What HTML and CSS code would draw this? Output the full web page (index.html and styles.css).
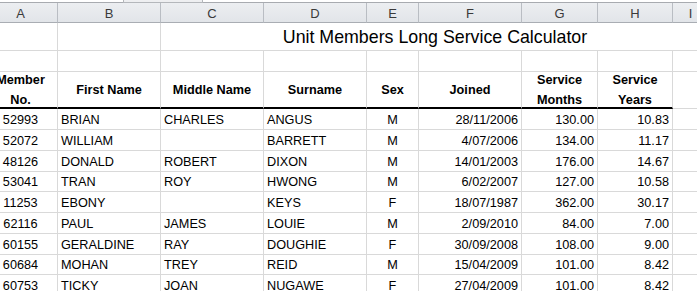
FILE: index.html
```html
<!DOCTYPE html>
<html>
<head>
<meta charset="utf-8">
<link rel="stylesheet" href="styles.css">
</head>
<body>
<div class="chrome"><div class="chrome-tab"></div></div>
<div class="sheet">
  <div class="c ch">A</div><div class="c ch">B</div><div class="c ch">C</div><div class="c ch">D</div><div class="c ch">E</div><div class="c ch">F</div><div class="c ch">G</div><div class="c ch">H</div><div class="c ch">I</div>

  <div class="c"></div><div class="c"></div><div class="c title">Unit Members Long Service Calculator</div>

  <div class="c"></div><div class="c"></div><div class="c"></div><div class="c"></div><div class="c"></div><div class="c"></div><div class="c"></div><div class="c"></div><div class="c"></div>

  <div class="c hd">Member<br>No.</div><div class="c hd">First Name</div><div class="c hd">Middle Name</div><div class="c hd">Surname</div><div class="c hd">Sex</div><div class="c hd">Joined</div><div class="c hd">Service<br>Months</div><div class="c hd">Service<br>Years</div><div class="c"></div>

  <div class="c cen">52993</div><div class="c">BRIAN</div><div class="c">CHARLES</div><div class="c">ANGUS</div><div class="c cen">M</div><div class="c rt">28/11/2006</div><div class="c rt">130.00</div><div class="c rt">10.83</div><div class="c"></div>
  <div class="c cen">52072</div><div class="c">WILLIAM</div><div class="c"></div><div class="c">BARRETT</div><div class="c cen">M</div><div class="c rt">4/07/2006</div><div class="c rt">134.00</div><div class="c rt">11.17</div><div class="c"></div>
  <div class="c cen">48126</div><div class="c">DONALD</div><div class="c">ROBERT</div><div class="c">DIXON</div><div class="c cen">M</div><div class="c rt">14/01/2003</div><div class="c rt">176.00</div><div class="c rt">14.67</div><div class="c"></div>
  <div class="c cen">53041</div><div class="c">TRAN</div><div class="c">ROY</div><div class="c">HWONG</div><div class="c cen">M</div><div class="c rt">6/02/2007</div><div class="c rt">127.00</div><div class="c rt">10.58</div><div class="c"></div>
  <div class="c cen">11253</div><div class="c">EBONY</div><div class="c"></div><div class="c">KEYS</div><div class="c cen">F</div><div class="c rt">18/07/1987</div><div class="c rt">362.00</div><div class="c rt">30.17</div><div class="c"></div>
  <div class="c cen">62116</div><div class="c">PAUL</div><div class="c">JAMES</div><div class="c">LOUIE</div><div class="c cen">M</div><div class="c rt">2/09/2010</div><div class="c rt">84.00</div><div class="c rt">7.00</div><div class="c"></div>
  <div class="c cen">60155</div><div class="c">GERALDINE</div><div class="c">RAY</div><div class="c">DOUGHIE</div><div class="c cen">F</div><div class="c rt">30/09/2008</div><div class="c rt">108.00</div><div class="c rt">9.00</div><div class="c"></div>
  <div class="c cen">60684</div><div class="c">MOHAN</div><div class="c">TREY</div><div class="c">REID</div><div class="c cen">M</div><div class="c rt">15/04/2009</div><div class="c rt">101.00</div><div class="c rt">8.42</div><div class="c"></div>
  <div class="c cen">60753</div><div class="c">TICKY</div><div class="c">JOAN</div><div class="c">NUGAWE</div><div class="c cen">F</div><div class="c rt">27/04/2009</div><div class="c rt">101.00</div><div class="c rt">8.42</div><div class="c"></div>
</div>
</body>
</html>
```
FILE: styles.css
```css
html, body {
  margin: 0;
  padding: 0;
}
body {
  width: 697px;
  height: 291px;
  overflow: hidden;
  background: #ffffff;
  font-family: "Liberation Sans", Arial, sans-serif;
  color: #000000;
}
.chrome {
  height: 2px;
  border-bottom: 1px solid #a8abb0;
  display: flex;
}
.chrome-tab {
  margin-left: 123px;
  width: 80px;
  height: 3px;
  box-sizing: border-box;
  border: 1px solid #b4b7bb;
  border-top: none;
  background: #eeeff1;
}
.sheet {
  display: grid;
  grid-template-columns: 74px 103px 103px 103px 52px 103px 76px 75px 36px;
  grid-template-rows: 20px 28px 21px 37px 21px repeat(8, 20.75px);
  margin-left: -16px;
  font-size: 12.7px;
}
.c {
  box-sizing: border-box;
  border-right: 1px solid #d9d9d9;
  border-bottom: 1px solid #d9d9d9;
  display: flex;
  align-items: flex-end;
  padding: 0 3px 1px;
  white-space: nowrap;
  overflow: hidden;
  line-height: 15px;
}
.cen {
  justify-content: center;
}
.rt {
  justify-content: flex-end;
}
.ch {
  background: linear-gradient(#eceef1, #e2e5e9);
  border-right-color: #b9bdc3;
  border-bottom-color: #a9adb3;
  justify-content: center;
  align-items: center;
  color: #3a3a3a;
  font-size: 13px;
  padding: 2px 0 0;
}
.title {
  grid-column: 3 / 10;
  justify-content: center;
  font-size: 17.8px;
  line-height: 20px;
  padding-bottom: 3px;
  border-right: none;
}
.hd {
  font-weight: bold;
  text-align: center;
  justify-content: center;
  align-items: center;
  line-height: 20px;
  white-space: normal;
  overflow: visible;
  border-bottom: 2px solid #000000;
  padding: 0;
}
```
